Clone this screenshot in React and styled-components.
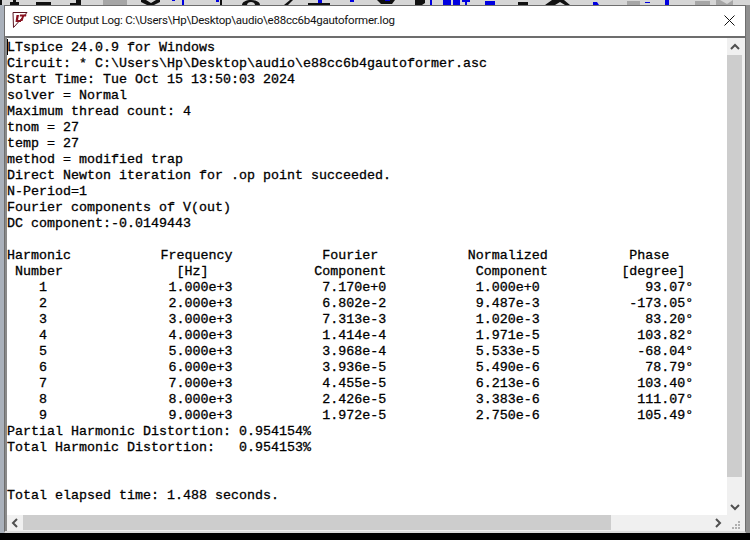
import React from "react";
import styled, { createGlobalStyle } from "styled-components";

const Global = createGlobalStyle`
  html, body {
    margin: 0;
    padding: 0;
    width: 750px;
    height: 540px;
    overflow: hidden;
    background: #000;
  }
`;

const Backdrop = styled.div`
  width: 750px;
  height: 540px;
  display: flex;
  flex-direction: column;
  background: #000;
`;

const ToolbarScrap = styled.svg`
  display: block;
  width: 750px;
  height: 5px;
  flex: none;
  background: #d6d6d6;
`;

const WindowRow = styled.div`
  height: 528px;
  flex: none;
  display: flex;
`;

const SideEdge = styled.div`
  width: ${(p) => p.$w}px;
  flex: none;
  background: ${(p) => p.$color};
`;

const Win = styled.div`
  flex: 1;
  min-width: 0;
  display: flex;
  flex-direction: column;
  background: #f0f0f0;
  border: 1px solid #6e6e6e;
  border-bottom: 2px solid #dcdcdc;
`;

const TitleBar = styled.div`
  height: 30px;
  flex: none;
  display: flex;
  align-items: center;
  background: #fff;
  padding: 0 10px 2px 7px;
  box-sizing: border-box;
`;

const AppIcon = styled.svg`
  width: 16px;
  height: 16px;
  flex: none;
  margin-right: 5px;
`;

const Title = styled.div`
  flex: 1;
  font: 11.5px Roboto, "Noto Sans", sans-serif;
  letter-spacing: -0.23px;
  color: #111;
  white-space: nowrap;
`;

const CloseIcon = styled.svg`
  width: 11px;
  height: 11px;
  flex: none;
`;

const Client = styled.div`
  flex: 1;
  min-height: 0;
  display: grid;
  grid-template-columns: 720px 17px;
  grid-template-rows: 477px 16px;
  border-top: 2px solid #6d6d6d;
  border-left: 2px solid #8a8a8a;
`;

const Log = styled.div`
  position: relative;
  padding-top: 2px;
  background: #fff;
  color: #000;
  font: 13.33px/16px "Liberation Mono", monospace;
  -webkit-text-stroke: 0.3px #000;
  overflow: hidden;
`;

const Caret = styled.div`
  position: absolute;
  left: 0;
  top: 1px;
  width: 1px;
  height: 16px;
  background: #000;
`;

const Lines = styled.pre`
  margin: 0;
  font: inherit;
`;

const HarmonicRow = styled.div`
  display: grid;
  grid-template-columns: repeat(5, 153.6px);
  white-space: pre;
`;

const Blank = styled.div`
  height: 16px;
`;

const VBar = styled.div`
  display: flex;
  flex-direction: column;
  background: #f0f0f0;
`;

const HBar = styled.div`
  display: flex;
  background: #f0f0f0;
`;

const VArrow = styled.div`
  width: 15px;
  height: 17px;
  flex: none;
  display: flex;
  align-items: center;
  justify-content: center;
`;

const HArrow = styled.div`
  width: 16px;
  height: 15px;
  flex: none;
  display: flex;
  align-items: center;
  justify-content: center;
`;

const VThumb = styled.div`
  width: 15px;
  height: ${(p) => p.$size}px;
  flex: none;
  background: #cdcdcd;
`;

const HThumb = styled.div`
  width: ${(p) => p.$size}px;
  height: 15px;
  flex: none;
  background: #cdcdcd;
`;

const Gap = styled.div`
  flex: 1;
`;

const Grip = styled.svg`
  display: block;
  width: 17px;
  height: 16px;
  background: #f0f0f0;
`;

const Chevron = ({ points }) => (
  <svg width="10" height="10" viewBox="0 0 10 10">
    <polyline points={points} fill="none" stroke="#505050" strokeWidth="2" />
  </svg>
);

const head = `LTspice 24.0.9 for Windows
Circuit: * C:\\Users\\Hp\\Desktop\\audio\\e88cc6b4gautoformer.asc
Start Time: Tue Oct 15 13:50:03 2024
solver = Normal
Maximum thread count: 4
tnom = 27
temp = 27
method = modified trap
Direct Newton iteration for .op point succeeded.
N-Period=1
Fourier components of V(out)
DC component:-0.0149443`;

const harmonics = [
  ["Harmonic", "Frequency", " Fourier", "Normalized", " Phase"],
  [" Number", "  [Hz]", "Component", " Component", "[degree]"],
  ["    1", " 1.000e+3", " 7.170e+0", " 1.000e+0", "   93.07°"],
  ["    2", " 2.000e+3", " 6.802e-2", " 9.487e-3", " -173.05°"],
  ["    3", " 3.000e+3", " 7.313e-3", " 1.020e-3", "   83.20°"],
  ["    4", " 4.000e+3", " 1.414e-4", " 1.971e-5", "  103.82°"],
  ["    5", " 5.000e+3", " 3.968e-4", " 5.533e-5", "  -68.04°"],
  ["    6", " 6.000e+3", " 3.936e-5", " 5.490e-6", "   78.79°"],
  ["    7", " 7.000e+3", " 4.455e-5", " 6.213e-6", "  103.40°"],
  ["    8", " 8.000e+3", " 2.426e-5", " 3.383e-6", "  111.07°"],
  ["    9", " 9.000e+3", " 1.972e-5", " 2.750e-6", "  105.49°"],
];

const tail = `Partial Harmonic Distortion: 0.954154%
Total Harmonic Distortion:   0.954153%


Total elapsed time: 1.488 seconds.`;

export default function App() {
  return (
    <>
      <Global />
      <Backdrop>
        {/* bottom edge of the toolbar of the window behind */}
        <ToolbarScrap viewBox="0 0 750 5">
          <path d="M0 0h2v5H0zM13 0h3v2h3v3H10V2h3zM36 2h15v3H36zM70 3h6V0h5v5H70zM141 0h5l5 3 5-3h4v2l-6 3h-7l-6-3zM220 0h2v5h-2zM242 5c0-3 4-5 9-5s9 2 9 5h-5c0-2-2-3-4-3s-4 1-4 3zM284 5l6-5h3l-5 5zM308 3h22v2h-22zM377 0h18l-3 4h-11zM415 0h10v3l-3 2h-7zM518 2h10v3h-10zM545 5l7-5h12l6 5h-5l-5-3-5 3z" fill="#111" />
          <path d="M103 0h24v5h-24zM627 1h13v4h-13zM695 1h15v4h-15zM716 0h4l7 4 6-4v5h-17z" fill="#a6a6a6" />
          <path d="M172 0h3v1h-3zM182 0h2v5h-2zM216 0h3v2h-3zM318 0h4v3h-4zM350 0h4v2h-4zM385 0h5v1h-5zM430 0h2v5h-2zM443 0h8v5h-8zM453 0h7v5h-7zM462 0h8v2h-3v3h-2V2h-3zM485 1h10v4h-10zM593 2h4l2 3h-6zM645 2h5v1h-5zM665 0h4v5h-4z" fill="#0000e0" />
        </ToolbarScrap>
        <WindowRow>
          <SideEdge $w={4} $color="#aab1bb" />
          <Win>
            <TitleBar>
              <AppIcon viewBox="0 0 16 16">
                <path d="M1 .5H15L1.5 15.5Z" fill="#fff" stroke="#5a1420" strokeWidth="1" />
                <path d="M4.5 3H7L6 8h3V10H3.5zM8 2.5h6.5L14 4.5h-2L10.5 9H8.5L10 4.5H7.7z" fill="#8a1220" />
              </AppIcon>
              <Title>SPICE Output Log: C:\Users\Hp\Desktop\audio\e88cc6b4gautoformer.log</Title>
              <CloseIcon viewBox="0 0 11 11">
                <path d="M0.5 0.5L10.5 10.5M10.5 0.5L0.5 10.5" stroke="#111" strokeWidth="1" />
              </CloseIcon>
            </TitleBar>
            <Client>
              <Log>
                <Caret />
                <Lines>{head}</Lines>
                <Blank />
                {harmonics.map((row, i) => (
                  <HarmonicRow key={i}>
                    {row.map((cell, j) => (
                      <span key={j}>{cell}</span>
                    ))}
                  </HarmonicRow>
                ))}
                <Lines>{tail}</Lines>
              </Log>
              <VBar>
                <VArrow><Chevron points="1,7 5,3 9,7" /></VArrow>
                <VThumb $size={422} />
                <Gap />
                <VArrow><Chevron points="1,3 5,7 9,3" /></VArrow>
              </VBar>
              <HBar>
                <HArrow><Chevron points="7,1 3,5 7,9" /></HArrow>
                <HThumb $size={588} />
                <Gap />
                <HArrow><Chevron points="2,1 6,5 2,9" /></HArrow>
              </HBar>
              <Grip viewBox="0 0 17 16">
                <path d="M11 6h2v2h-2zM8 9h2v2H8zM11 9h2v2h-2zM5 12h2v2H5zM8 12h2v2H8zM11 12h2v2h-2z" fill="#b0b0b0" />
              </Grip>
            </Client>
          </Win>
          <SideEdge $w={4} $color="#8f8f8f" />
        </WindowRow>
      </Backdrop>
    </>
  );
}
